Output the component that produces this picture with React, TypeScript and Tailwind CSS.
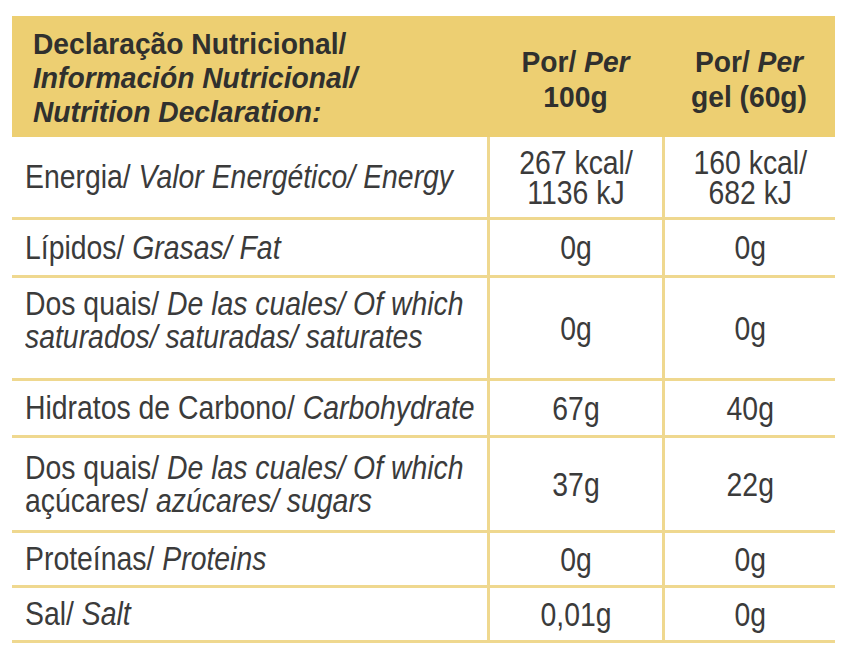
import React from 'react';

type Row = {
  label: React.ReactNode[];
  a: string[];
  b: string[];
  h: string;
  labelCls?: string;
};

const rows: Row[] = [
  {
    label: [
      <>
        Energia/ <i>Valor Energético/ Energy</i>
      </>,
    ],
    a: ['267 kcal/', '1136 kJ'],
    b: ['160 kcal/', '682 kJ'],
    h: 'h-[81px]',
  },
  {
    label: [
      <>
        Lípidos/ <i>Grasas/ Fat</i>
      </>,
    ],
    a: ['0g'],
    b: ['0g'],
    h: 'h-[58px]',
  },
  {
    label: [
      <>
        Dos quais/ <i>De las cuales/ Of which</i>
      </>,
      <i>saturados/ saturadas/ saturates</i>,
    ],
    a: ['0g'],
    b: ['0g'],
    h: 'h-[103px]',
    labelCls: 'pb-[16px]',
  },
  {
    label: [
      <>
        Hidratos de Carbono/ <i>Carbohydrate</i>
      </>,
    ],
    a: ['67g'],
    b: ['40g'],
    h: 'h-[57px]',
  },
  {
    label: [
      <>
        Dos quais/ <i>De las cuales/ Of which</i>
      </>,
      <>
        açúcares/ <i>azúcares/ sugars</i>
      </>,
    ],
    a: ['37g'],
    b: ['22g'],
    h: 'h-[95px]',
  },
  {
    label: [
      <>
        Proteínas/ <i>Proteins</i>
      </>,
    ],
    a: ['0g'],
    b: ['0g'],
    h: 'h-[55px]',
  },
  {
    label: [
      <>
        Sal/ <i>Salt</i>
      </>,
    ],
    a: ['0,01g'],
    b: ['0g'],
    h: 'h-[55px]',
  },
];

// condensed look: Liberation Sans squeezed horizontally
const Line: React.FC<{ children: React.ReactNode; center?: boolean; bold?: boolean }> = ({
  children,
  center,
  bold,
}) => (
  <div
    className={`whitespace-nowrap ${center ? 'origin-center text-center' : 'origin-left'} ${
      bold ? 'scale-x-[0.94]' : 'scale-x-[0.86]'
    }`}
  >
    {children}
  </div>
);

const App: React.FC = () => {
  return (
    <div className="w-[841px] h-[661px] bg-white pt-[16px] pl-[12px] font-['Liberation_Sans',Arial,sans-serif] text-[#3b3b3b]">
      <table className="w-[823px] border-collapse table-fixed">
        <colgroup>
          <col className="w-[476px]" />
          <col className="w-[175px]" />
          <col className="w-[172px]" />
        </colgroup>
        <thead>
          {/* Header band */}
          <tr className="h-[121px] bg-[#edcf72] text-[30px] leading-[34px] text-[#30302e]">
            <th className="text-left align-middle pl-[21px] pt-[3px] font-bold">
              <Line bold>Declaração Nutricional/</Line>
              <Line bold>
                <i>Información Nutricional/</i>
              </Line>
              <Line bold>
                <i>Nutrition Declaration:</i>
              </Line>
            </th>
            <th className="align-middle font-bold pt-[4px] leading-[35px]">
              <Line bold center>
                Por/ <i>Per</i>
              </Line>
              <Line bold center>
                100g
              </Line>
            </th>
            <th className="align-middle font-bold pt-[4px] leading-[35px]">
              <Line bold center>
                Por/ <i>Per</i>
              </Line>
              <Line bold center>
                gel (60g)
              </Line>
            </th>
          </tr>
        </thead>
        <tbody className="text-[33px] leading-[33px]">
          {rows.map((r, i) => (
            <tr key={i} className={`${r.h} border-b-[3px] border-[#efd88f]`}>
              <td className={`pl-[13px] align-middle ${r.labelCls ?? ''}`}>
                {r.label.map((l, j) => (
                  <Line key={j}>{l}</Line>
                ))}
              </td>
              <td className="align-middle border-l-[3px] border-[#efd88f] leading-[30px] pt-[2px]">
                {r.a.map((v) => (
                  <Line key={v} center>
                    {v}
                  </Line>
                ))}
              </td>
              <td className="align-middle border-l-[3px] border-[#efd88f] leading-[30px] pt-[2px]">
                {r.b.map((v) => (
                  <Line key={v} center>
                    {v}
                  </Line>
                ))}
              </td>
            </tr>
          ))}
        </tbody>
      </table>
    </div>
  );
};

export default App;
